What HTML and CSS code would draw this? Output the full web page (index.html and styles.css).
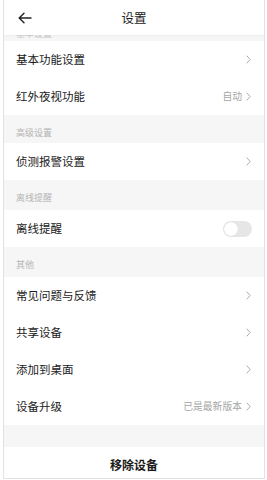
FILE: index.html
```html
<!DOCTYPE html>
<html lang="zh">
<head>
<meta charset="utf-8">
<link rel="stylesheet" href="styles.css">
</head>
<body>
<div class="frame">
  <div class="header">
    <svg class="back" width="14" height="12" viewBox="0 0 14 12"><path d="M13 6H1.5M6 1.2L1.2 6L6 10.8" fill="none" stroke="#222" stroke-width="1.4" stroke-linecap="round" stroke-linejoin="round"/></svg>
    <div class="title">设置</div>
  </div>
  <div class="list">
    <div class="section cut"><span>基本设置</span></div>
    <div class="row"><span class="label">基本功能设置</span><span class="right"><svg class="chev" width="5" height="9" viewBox="0 0 5 9"><path d="M0.7 0.7L4.2 4.5L0.7 8.3" fill="none" stroke="#aaa" stroke-width="1"/></svg></span></div>
    <div class="row"><span class="label">红外夜视功能</span><span class="right"><span class="value">自动</span><svg class="chev" width="5" height="9" viewBox="0 0 5 9"><path d="M0.7 0.7L4.2 4.5L0.7 8.3" fill="none" stroke="#aaa" stroke-width="1"/></svg></span></div>
    <div class="section short"><span>高级设置</span></div>
    <div class="row"><span class="label">侦测报警设置</span><span class="right"><svg class="chev" width="5" height="9" viewBox="0 0 5 9"><path d="M0.7 0.7L4.2 4.5L0.7 8.3" fill="none" stroke="#aaa" stroke-width="1"/></svg></span></div>
    <div class="section"><span>离线提醒</span></div>
    <div class="row"><span class="label">离线提醒</span><span class="toggle"><span class="knob"></span></span></div>
    <div class="section"><span>其他</span></div>
    <div class="row"><span class="label">常见问题与反馈</span><span class="right"><svg class="chev" width="5" height="9" viewBox="0 0 5 9"><path d="M0.7 0.7L4.2 4.5L0.7 8.3" fill="none" stroke="#aaa" stroke-width="1"/></svg></span></div>
    <div class="row"><span class="label">共享设备</span><span class="right"><svg class="chev" width="5" height="9" viewBox="0 0 5 9"><path d="M0.7 0.7L4.2 4.5L0.7 8.3" fill="none" stroke="#aaa" stroke-width="1"/></svg></span></div>
    <div class="row"><span class="label">添加到桌面</span><span class="right"><svg class="chev" width="5" height="9" viewBox="0 0 5 9"><path d="M0.7 0.7L4.2 4.5L0.7 8.3" fill="none" stroke="#aaa" stroke-width="1"/></svg></span></div>
    <div class="row"><span class="label">设备升级</span><span class="right"><span class="value">已是最新版本</span><svg class="chev" width="5" height="9" viewBox="0 0 5 9"><path d="M0.7 0.7L4.2 4.5L0.7 8.3" fill="none" stroke="#aaa" stroke-width="1"/></svg></span></div>
    <div class="gap"></div>
    <div class="remove">移除设备</div>
  </div>
</div>
</body>
</html>
```
FILE: styles.css
```css
html, body {
  margin: 0;
  padding: 0;
  background: #fff;
}
body {
  font-family: "Noto Sans CJK SC", "Noto Sans", sans-serif;
  color: #222;
}
.frame {
  margin: 0 2px 0 3px;
  height: 479px;
  box-sizing: border-box;
  border: 1px solid #e2e2e2;
  border-top: none;
  display: flex;
  flex-direction: column;
  overflow: hidden;
}
.header {
  height: 35px;
  display: flex;
  align-items: center;
  justify-content: center;
  position: relative;
  background: #fff;
  box-shadow: 0 1px 2px rgba(0,0,0,0.04);
  z-index: 1;
}
.back {
  position: absolute;
  left: 14px;
  top: 12px;
}
.title {
  font-size: 12.5px;
  line-height: 14px;
  color: #1a1a1a;
  margin-top: 1px;
}
.list {
  display: flex;
  flex-direction: column;
  flex: 1;
}
.section {
  height: 30px;
  background: #f6f6f6;
  display: flex;
  align-items: flex-end;
  padding: 0 12px 7px;
  box-sizing: border-box;
  font-size: 9px;
  line-height: 10px;
  color: #b4b4b4;
}
.section.short {
  height: 28px;
  padding-bottom: 5px;
}
.section.cut {
  height: 6px;
  padding: 0 12px;
  overflow: hidden;
  align-items: flex-start;
}
.section.cut span {
  margin-top: -6px;
  color: #c8c8c8;
}
.row {
  height: 37px;
  display: flex;
  align-items: center;
  justify-content: space-between;
  padding: 0 13px 0 12px;
  background: #fff;
}
.label {
  font-size: 11.5px;
  line-height: 13px;
  color: #1a1a1a;
}
.right {
  display: flex;
  align-items: center;
  gap: 4px;
}
.value {
  font-size: 9.8px;
  line-height: 11px;
  color: #a6a6a6;
}
.chev {
  display: block;
}
.toggle {
  width: 29px;
  height: 16px;
  border-radius: 8px;
  background: #e6e6e6;
  display: flex;
  align-items: center;
  padding: 0 1px;
  box-sizing: border-box;
  margin-right: -1px;
}
.knob {
  width: 14px;
  height: 14px;
  border-radius: 50%;
  background: #fff;
  box-shadow: 0 0 1px rgba(0,0,0,0.15);
}
.gap {
  height: 22px;
  background: #f6f6f6;
}
.remove {
  flex: 1;
  display: flex;
  align-items: center;
  justify-content: center;
  font-size: 12px;
  font-weight: bold;
  color: #1a1a1a;
  padding-top: 4px;
}
```
